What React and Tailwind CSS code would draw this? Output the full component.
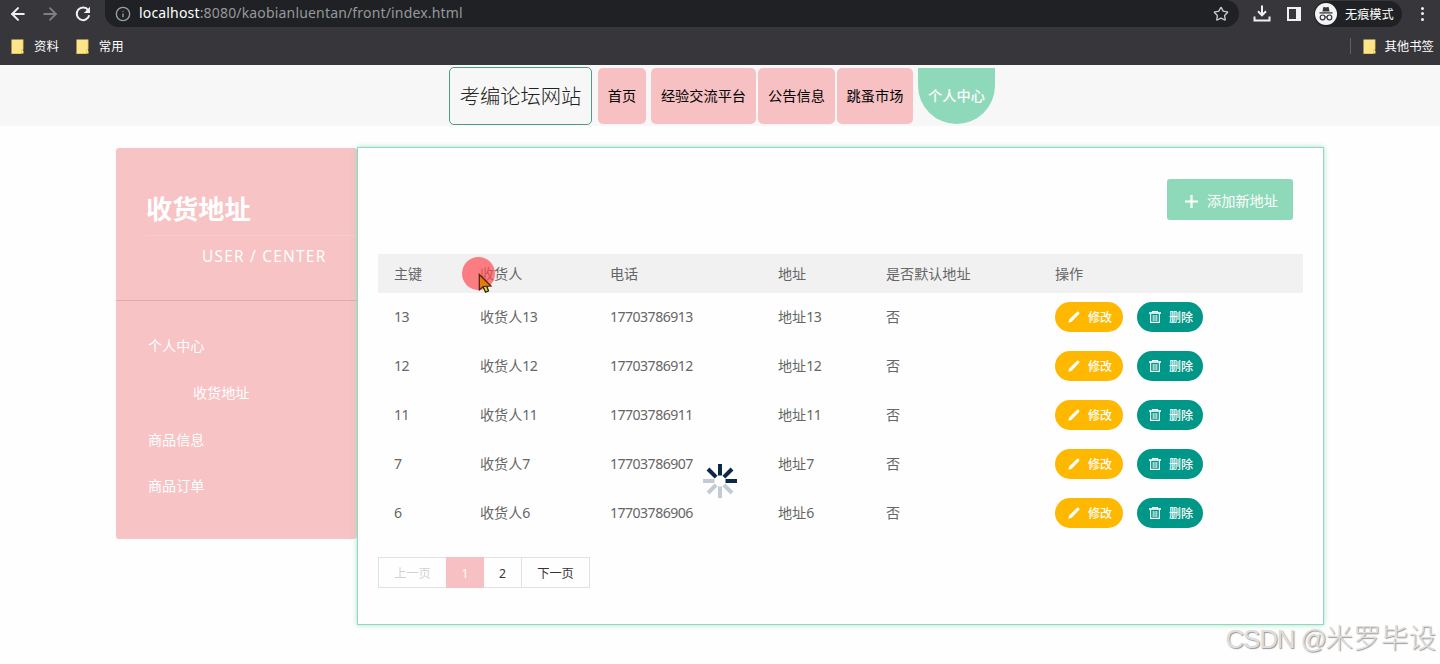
import { ArrowLeft, ArrowRight, Info, Star } from "lucide-react";

const navItems = ["首页", "经验交流平台", "公告信息", "跳蚤市场"];
const navWidths = ["w-[48px] mr-[5px]", "w-[105px] mr-[2px]", "w-[77px] mr-[2px]", "w-[76px] mr-[5px]"];

const rows = [
  { id: "13", phone: "17703786913" },
  { id: "12", phone: "17703786912" },
  { id: "11", phone: "17703786911" },
  { id: "7", phone: "17703786907" },
  { id: "6", phone: "17703786906" },
];

const spokes = [0, 45, 90, 135, 180, 225, 270, 315];

function Num({ children }) {
  return <span className="tracking-[-0.54px]">{children}</span>;
}

function FolderIcon() {
  return (
    <svg width="13" height="15" viewBox="0 0 13 15">
      <path d="M0.5 0.5H12V11.5L12.5 12V14.5H0.5Z" fill="#ffe58a" />
      <path d="M12 0.5V10.5H10.5V14.5H0.5" fill="none" stroke="#efc94f" strokeWidth="0.9" />
    </svg>
  );
}

function ReloadIcon() {
  return (
    <svg width="16" height="16" viewBox="0 0 16 16">
      <path d="M13.2 4.2A6.3 6.3 0 1 0 14.2 9.2" fill="none" stroke="#f1f1f1" strokeWidth="2" />
      <path d="M15 0.8V7H8.8Z" fill="#f1f1f1" />
    </svg>
  );
}

function DownloadIcon() {
  return (
    <svg width="18" height="17" viewBox="0 0 18 17" fill="none" stroke="#f1f1f1" strokeWidth="2">
      <path d="M9 0.5V10M5 6.3L9 10.3L13 6.3M1.5 11.5V15.5H16.5V11.5" />
    </svg>
  );
}

function IncognitoIcon() {
  return (
    <svg width="22" height="22" viewBox="0 0 22 22">
      <circle cx="11" cy="11" r="11" fill="#f4f4f5" />
      <path d="M7.4 8.4L8.3 4.4Q8.5 3.7 9.3 3.9L11 4.4L12.7 3.9Q13.5 3.7 13.7 4.4L14.6 8.4Z" fill="#35363a" />
      <path d="M4.5 9.9H17.5" stroke="#35363a" strokeWidth="1.3" />
      <g fill="none" stroke="#35363a" strokeWidth="1.2">
        <circle cx="7.6" cy="14.4" r="2.4" />
        <circle cx="14.4" cy="14.4" r="2.4" />
        <path d="M10 14.2Q11 13.4 12 14.2" />
      </g>
    </svg>
  );
}

function PencilIcon() {
  return (
    <svg width="12" height="12" viewBox="0 0 12 12" fill="#fff">
      <path d="M0.3 11.7L1.3 8.3L8.9 0.9Q9.9 0.1 10.9 1.1Q11.9 2.1 11.1 3.1L3.7 10.7Z" />
    </svg>
  );
}

function TrashIcon() {
  return (
    <svg width="12" height="12" viewBox="0 0 12 12" fill="none" stroke="#fff">
      <path d="M0 2H12" strokeWidth="1.6" />
      <path d="M3.5 1.6V0.5H8.5V1.6M1.6 2.5V11.4H10.4V2.5" strokeWidth="1.1" />
      <path d="M4.2 4V10M6 4V10M7.8 4V10" strokeWidth="0.9" />
    </svg>
  );
}

function BrowserBar() {
  return (
    <div className="h-[65px] bg-[#36363b] text-white">
      <div className="flex h-[27px] items-center">
        <ArrowLeft className="ml-[8px] shrink-0" size={20} strokeWidth={2.4} color="#f1f1f1" />
        <ArrowRight className="ml-[12px] shrink-0" size={20} strokeWidth={2.2} color="#7f8083" />
        <div className="ml-[15px] shrink-0">
          <ReloadIcon />
        </div>
        <div className="ml-[14px] flex h-[27px] w-[1134px] shrink-0 items-center rounded-r-full rounded-bl-full bg-[#202124] pr-[10px] pl-[10px]">
          <Info size={16} strokeWidth={2} color="#9aa0a6" />
          <div className="ml-[8px] flex-1 pb-[2px] text-[14px] tracking-[0.17px] text-[#96999c]">
            <span className="text-white">localhost</span>:8080/kaobianluentan/front/index.html
          </div>
          <Star size={16} strokeWidth={2} color="#c9cacc" />
        </div>
        <div className="ml-[14px] shrink-0">
          <DownloadIcon />
        </div>
        <div className="ml-[16px] h-[14px] w-[14px] shrink-0 border-2 border-r-[5px] border-[#f1f1f1]"></div>
        <div className="ml-[13px] flex h-[26px] w-[88px] shrink-0 items-center rounded-full bg-[#202124] pl-px">
          <IncognitoIcon />
          <span className="ml-[8px] pt-[3px] text-[12.2px]">无痕模式</span>
        </div>
        <div className="ml-[19px] flex flex-col gap-[2.5px]">
          <i className="h-[3px] w-[3px] rounded-full bg-[#f1f1f1]"></i>
          <i className="h-[3px] w-[3px] rounded-full bg-[#f1f1f1]"></i>
          <i className="h-[3px] w-[3px] rounded-full bg-[#f1f1f1]"></i>
        </div>
      </div>
      <div className="flex h-[38px] items-center pr-[6px] pl-[11px] text-[12.4px]">
        <FolderIcon />
        <span className="ml-[10px] pt-[2px]">资料</span>
        <span className="ml-[17px]">
          <FolderIcon />
        </span>
        <span className="ml-[10px] pt-[2px]">常用</span>
        <div className="ml-auto mr-[12px] h-[16px] w-px bg-[#5f6064]"></div>
        <FolderIcon />
        <span className="ml-[8px] pt-[2px]">其他书签</span>
      </div>
    </div>
  );
}

function NavBar() {
  return (
    <div className="flex h-[61px] items-start bg-[#f7f7f7] pt-[2px] pl-[449px] text-[14.2px]">
      <div className="mr-[6px] flex h-[58px] w-[143px] items-center justify-center rounded-[5px] border border-[#4f9c84] text-[20.3px] font-light text-[#222]">
        考编论坛网站
      </div>
      {navItems.map((item, index) => (
        <div
          key={item}
          className={`mt-px flex h-[56px] items-center justify-center rounded-[5px] bg-[#f7c1c4] text-black ${navWidths[index]}`}
        >
          {item}
        </div>
      ))}
      <div className="mt-px flex h-[56px] w-[77px] items-center justify-center rounded-b-full bg-[#8ed9ba] font-medium text-white">
        个人中心
      </div>
    </div>
  );
}

function Sidebar() {
  return (
    <div className="h-[391px] w-[241px] rounded-[3px] bg-[#f7c3c5] text-white">
      <div className="h-[153px] border-b border-[#e5a9ac] pt-[42px] pl-[30px]">
        <h1 className="h-[46px] border-b border-[#f9cbcd] text-[26.2px] leading-[38px] font-bold">收货地址</h1>
        <p className="mt-[8px] pl-[56px] text-[15.4px] leading-[25px] tracking-[1.25px]">USER / CENTER</p>
      </div>
      <ul className="pt-[22px] pl-[32px] text-[14.1px] leading-[46.8px]">
        <li>个人中心</li>
        <li className="pl-[45px]">收货地址</li>
        <li>商品信息</li>
        <li>商品订单</li>
      </ul>
    </div>
  );
}

function AddressTable() {
  return (
    <table className="w-[925px] table-fixed text-left text-[14.1px] text-[#666]">
      <thead>
        <tr className="h-[39px] bg-[#f2f1f2]">
          <th className="w-[86px] pt-px pl-4 font-normal">主键</th>
          <th className="w-[130px] pt-px pl-4 font-normal">收货人</th>
          <th className="w-[168px] pt-px pl-4 font-normal">电话</th>
          <th className="w-[108px] pt-px pl-4 font-normal">地址</th>
          <th className="w-[170px] pt-px pl-4 font-normal">是否默认地址</th>
          <th className="pt-px pl-[15px] font-normal">操作</th>
        </tr>
      </thead>
      <tbody>
        {rows.map((row) => (
          <tr key={row.id} className="h-[48.8px]">
            <td className="pb-px pl-4"><Num>{row.id}</Num></td>
            <td className="pb-px pl-4">收货人<Num>{row.id}</Num></td>
            <td className="pb-px pl-4"><Num>{row.phone}</Num></td>
            <td className="pb-px pl-4">地址<Num>{row.id}</Num></td>
            <td className="pb-px pl-4">否</td>
            <td className="pl-[15px]">
              <div className="flex gap-[14px] text-[12px] text-white">
                <button className="flex h-[30px] w-[68px] items-center rounded-full bg-[#ffb800] pl-[13px]">
                  <PencilIcon />
                  <span className="ml-[8px] pt-[2px] font-medium">修改</span>
                </button>
                <button className="flex h-[30px] w-[66px] items-center rounded-full bg-[#009688] pl-[12px]">
                  <TrashIcon />
                  <span className="ml-[8px] pt-[2px] font-medium">删除</span>
                </button>
              </div>
            </td>
          </tr>
        ))}
      </tbody>
    </table>
  );
}

function Pagination() {
  return (
    <div className="mt-[20px] flex h-[31px] w-[212px] border border-[#e5e0e2] text-[12.2px] text-[#333]">
      <div className="flex w-[67px] items-center justify-center pt-[3px] text-[#d2d2d2]">上一页</div>
      <div className="-my-px flex w-[38px] items-center justify-center bg-[#f7c1c4] pt-[3px] text-white">1</div>
      <div className="flex w-[38px] items-center justify-center border-r border-[#e5e0e2] pt-[3px]">2</div>
      <div className="flex w-[67px] items-center justify-center pt-[3px]">下一页</div>
    </div>
  );
}

function Spinner() {
  return (
    <svg className="absolute top-[464px] left-[703px]" width="34" height="34" viewBox="-17 -17 34 34">
      {spokes.map((angle) => (
        <path
          key={angle}
          d="M0 -17V-5.5"
          stroke={angle <= 90 || angle === 315 ? "#0d2847" : "#c3ccd4"}
          strokeWidth="4"
          transform={`rotate(${angle})`}
        />
      ))}
    </svg>
  );
}

function Cursor() {
  return (
    <div className="absolute top-[257px] left-[462px] h-[33px] w-[33px] rounded-full bg-[#ff4b50]/70">
      <svg className="absolute top-[16px] left-[16px]" width="16" height="22" viewBox="0 0 16 22">
        <path d="M5 13.5L7.5 19.2L10.5 18L8.5 12.5" fill="#c9e534" stroke="#2b2410" strokeWidth="1.3" />
        <path d="M1.3 1.5V17L5.2 13.5L13 13Z" fill="#df7d0d" stroke="#551c10" strokeWidth="1.2" />
      </svg>
    </div>
  );
}

function App() {
  return (
    <div className="relative h-[664px] w-[1440px] overflow-hidden bg-[#fefefe] font-['Noto_Sans','Noto_Sans_CJK_SC',sans-serif]">
      <BrowserBar />
      <NavBar />

      <div className="flex items-start pt-[22px] pl-[116px]">
        <Sidebar />
        {/* Address list */}
        <div className="-mt-px h-[478px] w-[967px] border border-[#90d9bd] bg-[#fefefe] px-[20px] pt-[31px] shadow-[0_0_5px_rgba(142,217,186,0.8)]">
          <button className="ml-auto mr-[10px] flex h-[41px] w-[126px] items-center rounded-[3px] bg-[#8ed9ba] pt-[3px] pl-[18px] text-[14.2px] text-white">
            <svg width="13" height="13" viewBox="0 0 13 13">
              <path d="M6.5 0V13M0 6.5H13" stroke="#fff" strokeWidth="2.2" />
            </svg>
            <span className="ml-[9px]">添加新地址</span>
          </button>
          <div className="mt-[34px]">
            <AddressTable />
          </div>
          <Pagination />
        </div>
      </div>

      <Cursor />
      <Spinner />
      <div className="absolute top-[619px] right-[4px] font-['Liberation_Sans','Noto_Sans_CJK_SC',sans-serif] text-[27.6px] leading-[40px] font-light whitespace-nowrap text-[#dedede] [text-shadow:1px_1px_1px_#999]">
        <span className="text-[26px] tracking-[-1.2px]">CSDN @</span>米罗毕设
      </div>
    </div>
  );
}

export default App;
